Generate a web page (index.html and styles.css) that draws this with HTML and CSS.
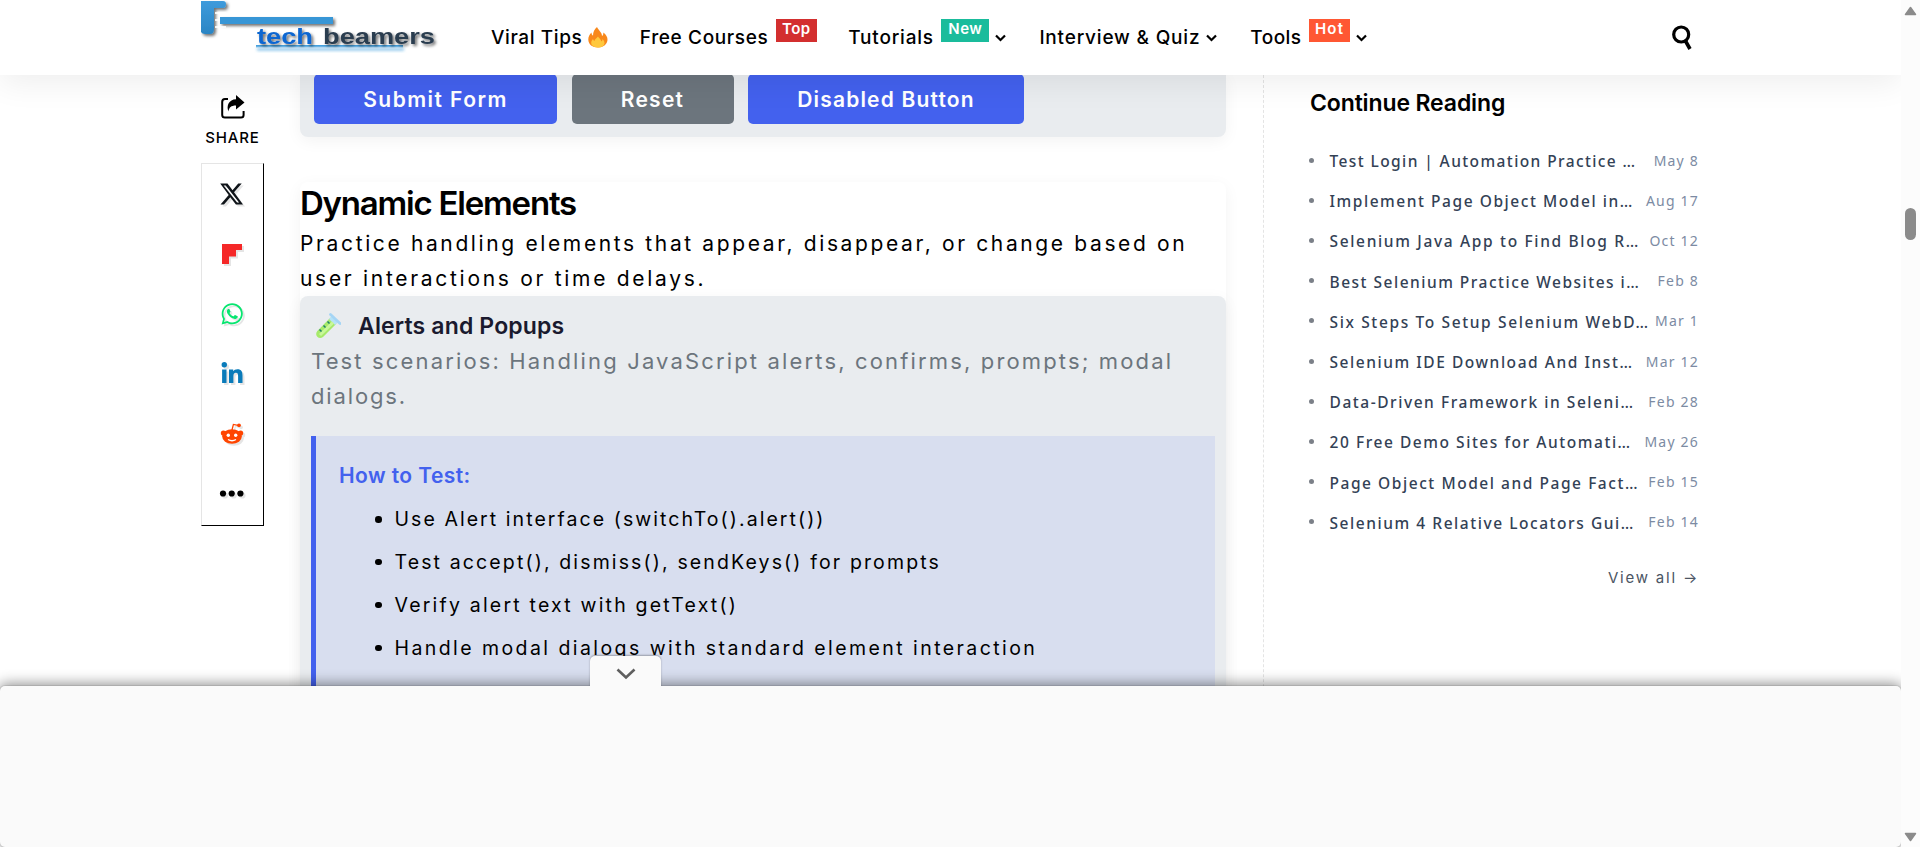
FILE: index.html
```html
<!DOCTYPE html>
<html lang="en">
<head>
<meta charset="utf-8">
<title>Selenium Practice - TechBeamers</title>
<link rel="stylesheet" href="styles.css">
</head>
<body>
<div class="viewport">
<div class="page">
  <header class="header">
    <div class="header-inner">
      <a class="logo">
        <svg width="240" height="56" viewBox="0 0 240 56">
          <defs>
            <filter id="soft" x="-20%" y="-40%" width="150%" height="220%"><feDropShadow dx="2" dy="2" stdDeviation="1.8" flood-color="#000" flood-opacity=".55"/></filter>
            <filter id="haze" x="-10%" y="-100%" width="120%" height="400%"><feDropShadow dx="1" dy="3" stdDeviation="1.6" flood-color="#3498db" flood-opacity=".6"/></filter>
            <linearGradient id="blue" x1="0" y1="0" x2="0" y2="1"><stop offset="0" stop-color="#3f9bdc"/><stop offset="1" stop-color="#2b85c4"/></linearGradient>
            <linearGradient id="line" x1="0" y1="0" x2="0" y2="1"><stop offset="0" stop-color="#3498db"/><stop offset="1" stop-color="#8cc3e8"/></linearGradient>
          </defs>
          <g filter="url(#soft)">
            <path d="M0 1H22Q25 1 25 4Q25 8 22 8H13V29Q13 34 9 34H4Q1 34 0 32Z" fill="url(#blue)"/>
            <rect x="19" y="17" width="113" height="7" fill="#3896d6"/>
          </g>
          <path d="M14 13H25M14 20H19M14 27H25" stroke="#fff" stroke-width="2" opacity=".85"/>
          <rect x="55" y="45" width="147" height="2.500" fill="url(#line)" filter="url(#haze)"/>
          <g filter="url(#soft)" class="logo-text">
            <text x="56" y="44" textLength="56" lengthAdjust="spacingAndGlyphs" fill="#0a66d0">tech</text>
            <text x="122" y="44" textLength="112" lengthAdjust="spacingAndGlyphs" fill="#2c3e50">beamers</text>
          </g>
        </svg>
      </a>
      <nav class="nav">
        <a class="nav-item"><span class="t1">Viral Tips</span>
          <svg class="fire" width="20" height="21" viewBox="0 0 20 21"><path d="M9 0C10 3 14 5 14 9C15 8.500 15.500 7.500 15.300 5.500C18 7.500 19.700 10 19.500 13C19.200 17.500 15 20.500 10 20.500C4.500 20.500.3 17.500.3 12.500C.3 9.500 1.500 7.500 3.500 5.500C3.500 7 4 8 5 8.700C5 5 6.500 2 9 0Z" fill="#f8881b"/><path d="M10 9.500C11 11.500 13 12 13.300 14.500C14.300 14 14.500 13 14.500 12C16.500 14 17 16 16 18C14.500 20 12.500 20.500 10 20.500C7 20.500 4.500 19.600 3.500 17.500C2.700 15.500 3.500 13.500 5 12C5.200 13 5.700 13.700 6.500 14C6.700 12 8.500 11.500 10 9.500Z" fill="#ffc83d"/></svg></a>
        <a class="nav-item"><span class="t2">Free Courses</span><b class="badge top">Top</b></a>
        <a class="nav-item"><span class="t3">Tutorials</span><b class="badge new">New</b><svg class="chev" width="13" height="8" viewBox="0 0 13 8"><path d="M1 1.500L5.500 6L10 1.500"/></svg></a>
        <a class="nav-item"><span class="t4">Interview &amp; Quiz</span><svg class="chev" width="13" height="8" viewBox="0 0 13 8"><path d="M1 1.500L5.500 6L10 1.500"/></svg></a>
        <a class="nav-item"><span class="t5">Tools</span><b class="badge hot">Hot</b><svg class="chev" width="13" height="8" viewBox="0 0 13 8"><path d="M1 1.500L5.500 6L10 1.500"/></svg></a>
      </nav>
      <svg class="search" width="20" height="26" viewBox="0 0 20 26"><circle cx="9.200" cy="9.500" r="7.500" fill="none" stroke="#000" stroke-width="3.200"/><path d="M13.500 16L18 24" stroke="#000" stroke-width="3.600"/></svg>
    </div>
  </header>

  <div class="columns">
    <aside class="share">
      <svg class="share-icon" width="24" height="24" viewBox="0 0 24 24"><path d="M7 4H4Q1.200 4 1.200 7V20Q1.200 22.500 4 22.500H20Q22.600 22.500 22.600 20V16" fill="none" stroke="#000" stroke-width="2"/><path d="M15 0L23.500 7.500L15 14.500V10.500C10 10.500 8 12.500 7.500 16.500C5 11 8 4.500 15 4.300Z" fill="#000"/></svg>
      <span class="share-label">SHARE</span>
      <div class="share-box">
        <svg width="24" height="24" viewBox="0 0 24 24"><path fill="#0f1419" d="M18.244 1.500h3.500l-7.700 8.800L23 22.500h-7.100l-5.600-7.300-6.300 7.300H.5l8.200-9.400L.2 1.500h7.300l5 6.700zm-1.200 19h2L5.700 3.400H3.600z"/></svg>
        <svg width="24" height="24" viewBox="0 0 24 24"><path fill="#f52828" d="M2 2H22V8H16V14.500H9V22H2Z"/></svg>
        <svg width="24" height="24" viewBox="0 0 24 24"><path fill="#07e670" d="M19.700 4.300C17.700 2.300 15 1.300 12.200 1.300 6.400 1.300 1.700 6 1.700 11.800c0 1.900.5 3.700 1.400 5.300L1.600 22.500l5.600-1.500c1.500.8 3.300 1.300 5 1.300 5.800 0 10.600-4.700 10.600-10.500 0-2.800-1.200-5.500-3.100-7.500zm-7.500 16.200c-1.600 0-3.100-.4-4.500-1.200l-.3-.2-3.300.9.9-3.200-.2-.3c-.9-1.400-1.300-3-1.300-4.700 0-4.800 3.900-8.700 8.700-8.700 2.300 0 4.500.9 6.200 2.600 1.600 1.600 2.600 3.800 2.600 6.100-.1 4.800-4 8.700-8.800 8.700zm4.800-6.500c-.3-.1-1.600-.8-1.800-.9-.2-.1-.4-.1-.6.1-.2.300-.7.900-.8 1-.2.200-.3.200-.6.100-1.500-.8-2.600-1.400-3.600-3.100-.3-.5.300-.4.800-1.400.1-.2 0-.3 0-.5s-.6-1.400-.8-1.900c-.2-.5-.4-.4-.6-.4h-.5c-.2 0-.5.100-.7.300-.2.300-.9.900-.9 2.200s.9 2.500 1.100 2.700c.1.200 1.800 2.800 4.500 4 1.700.7 2.300.8 3.200.7.500-.1 1.600-.7 1.800-1.300.2-.6.200-1.200.2-1.300-.1-.2-.3-.2-.7-.3z"/></svg>
        <svg width="24" height="24" viewBox="0 0 24 24"><g fill="#0a7bba"><circle cx="4.300" cy="2.800" r="2.700"/><path d="M2.100 7.500H6.500V21H2.100ZM9 7.500H13.200V9.300C14 8 15.400 7.200 17.400 7.200C21.500 7.200 22.500 9.800 22.500 13.500V21H18.100V14.300C18.100 12.500 17.900 10.800 15.900 10.800C13.900 10.800 13.400 12.300 13.400 14.200V21H9Z"/></g></svg>
        <svg width="24" height="24" viewBox="0 0 24 24"><g fill="#ff4500"><ellipse cx="12" cy="14.500" rx="9.800" ry="7.300"/><circle cx="3.400" cy="11" r="2.600"/><circle cx="20.600" cy="11" r="2.600"/><circle cx="19" cy="3.300" r="1.900"/></g><path d="M12 8L13.400 2.400L18 3.300" fill="none" stroke="#ff4500" stroke-width="1.300"/><circle cx="8.300" cy="13.200" r="1.700" fill="#fff"/><circle cx="15.700" cy="13.200" r="1.700" fill="#fff"/><path d="M8 17.500Q12 20 16 17.500" stroke="#fff" stroke-width="1.300" fill="none"/></svg>
        <svg width="26" height="24" viewBox="0 0 26 24"><circle cx="4" cy="11.500" r="3.100"/><circle cx="12.700" cy="11.500" r="3.100"/><circle cx="21.400" cy="11.500" r="3.100"/></svg>
      </div>
    </aside>

    <main class="article">
      <section class="card form-card">
        <button class="btn submit">Submit Form</button>
        <button class="btn reset">Reset</button>
        <button class="btn disabled">Disabled Button</button>
      </section>
      <section class="section">
        <h2>Dynamic Elements</h2>
        <p class="lead">Practice handling elements that appear, disappear, or change based on<br><span class="tail">user interactions or time delays.</span></p>
        <div class="card alerts">
          <h3><svg width="26" height="26" viewBox="0 0 26 26"><path d="M15.500 4.500L21.500 10.500L8 24C6.200 25.500 3.800 25.400 2.300 23.800C.8 22.200.8 20 2.300 18Z" fill="#a6ea6a"/><path d="M14 6L20 12L22.500 9.500L16.500 3.500Z" fill="#b5e2f8"/><path d="M15.500 1.500L25 10.500" stroke="#a5d5f5" stroke-width="2.800" stroke-linecap="round"/><path d="M5 22L18 9.500" stroke="#c9f79a" stroke-width="3"/><path d="M4.500 16.500L6.500 18.500M8.500 12.500L10.500 14.500M12.500 8.500L14.500 10.500" stroke="#1d7f6a" stroke-width="1.500"/></svg><span>Alerts and Popups</span></h3>
          <p class="muted">Test scenarios: Handling JavaScript alerts, confirms, prompts; modal<br><span class="last">dialogs.</span></p>
          <div class="note">
            <h4>How to Test:</h4>
            <ul>
              <li>Use Alert interface (switchTo().alert())</li>
              <li>Test accept(), dismiss(), sendKeys() for prompts</li>
              <li>Verify alert text with getText()</li>
              <li>Handle modal dialogs with standard element interaction</li>
            </ul>
          </div>
        </div>
      </section>
    </main>

    <aside class="sidebar">
      <h3 class="side-title">Continue Reading</h3>
      <ul class="posts">
        <li><a>Test Login | Automation Practice …</a><time>May 8</time></li>
        <li><a>Implement Page Object Model in…</a><time>Aug 17</time></li>
        <li><a>Selenium Java App to Find Blog R…</a><time>Oct 12</time></li>
        <li><a>Best Selenium Practice Websites i…</a><time>Feb 8</time></li>
        <li><a>Six Steps To Setup Selenium WebD…</a><time>Mar 1</time></li>
        <li><a>Selenium IDE Download And Inst…</a><time>Mar 12</time></li>
        <li><a>Data-Driven Framework in Seleni…</a><time>Feb 28</time></li>
        <li><a>20 Free Demo Sites for Automati…</a><time>May 26</time></li>
        <li><a>Page Object Model and Page Fact…</a><time>Feb 15</time></li>
        <li><a>Selenium 4 Relative Locators Gui…</a><time>Feb 14</time></li>
      </ul>
      <a class="view-all">View all →</a>
    </aside>
  </div>

  <div class="anchor-ad">
    <div class="ad-tab"><svg width="20" height="12" viewBox="0 0 20 12"><path d="M1.500 1.500L10 9.500L18.500 1.500" fill="none" stroke="#5f5f5f" stroke-width="2.600"/></svg></div>
  </div>
</div>
<div class="scrollbar">
  <svg class="up" width="13" height="10" viewBox="0 0 13 10"><path d="M6.500 1.500L11.500 8.500H1.500Z"/></svg>
  <div class="thumb"></div>
  <svg class="down" width="13" height="10" viewBox="0 0 13 10"><path d="M6.500 8.500L11.500 1.500H1.500Z"/></svg>
</div>
</div>
</body>
</html>
```

FILE: styles.css
```css
* { box-sizing: border-box; }
body { margin: 0; background: #fff; color: #000; font-family: Inter, "Noto Sans", sans-serif; overflow: hidden; }
h2, h3, h4, p, ul { margin: 0; padding: 0; }
ul { list-style: none; }
svg { display: block; flex: none; }

.viewport { display: flex; height: 847px; }
.page { position: relative; width: 1901px; height: 847px; overflow: hidden; }

/* header */
.header { position: relative; z-index: 3; height: 75px; background: #fff; box-shadow: 0 8px 32px rgba(0, 0, 0, .07); }
.header-inner { width: 1499px; height: 75px; margin: 0 auto; display: flex; align-items: center; }
.logo { align-self: flex-start; width: 290px; }
.logo-text { font: 700 22.5px "Liberation Sans", sans-serif; }
.nav { display: flex; gap: 31.5px; height: 75px; align-items: center; }
.nav-item { display: flex; align-items: center; height: 75px; font-size: 19px; font-weight: 500; white-space: nowrap; }
.t1 { letter-spacing: .6px; }
.t2 { letter-spacing: .63px; }
.t3 { letter-spacing: .8px; }
.t4 { letter-spacing: .81px; }
.t5 { letter-spacing: .47px; }
.fire { margin-left: 6px; }
.badge { align-self: flex-start; height: 23px; margin: 19px 0 0 7.5px; color: #fff; font-size: 15px; font-weight: 600; line-height: 20px; text-align: center; letter-spacing: .5px; }
.top { width: 41px; background: #d32f2f; }
.new { width: 48px; background: #1abc9c; }
.hot { width: 41px; background: #ff5733; letter-spacing: 1.2px; }
.chev { margin-left: 5.5px; fill: none; stroke: #000; stroke-width: 2.2; }
.search { margin-left: auto; margin-right: 8px; }

/* columns */
.columns { width: 1499px; height: 772px; margin: 0 auto; display: flex; }
.share { width: 63px; margin-right: 36px; padding-top: 20px; display: flex; flex-direction: column; align-items: center; }
.share-label { height: 20px; margin: 9px 0 15px; font-size: 15px; line-height: 20px; font-weight: 500; letter-spacing: .82px; white-space: nowrap; }
.share-box { width: 63px; height: 363px; display: flex; flex-direction: column; align-items: center; gap: 36px; padding: 17.5px 2px 0 0; border: 1px solid #e5e5e5; border-right-color: #000; border-bottom-color: #000; }
.share-box svg { filter: drop-shadow(2px 2px 0 rgba(0, 0, 0, .1)); }

.article { width: 926px; margin-top: -1px; }
.card { background: #e9ecef; border-radius: 8px; box-shadow: 0 4px 16px rgba(0, 0, 0, .05); }
.form-card { height: 63px; padding-left: 14px; display: flex; gap: 14.5px; border-radius: 0 0 8px 8px; }
.btn { height: 50px; padding: 0; border: 0; border-radius: 5px; color: #fff; background: #4361ee; font: 600 21px/52px Inter, sans-serif; }
.submit { width: 243px; letter-spacing: 1.44px; }
.reset { width: 162px; background: #6c757d; letter-spacing: 1.24px; }
.disabled { width: 276px; letter-spacing: 1.17px; }

.section { margin-top: 45px; border-radius: 8px; box-shadow: 0 4px 16px rgba(0, 0, 0, .05); }
h2 { height: 44px; font-size: 33px; line-height: 42px; font-weight: 600; letter-spacing: -1.21px; }
.lead { font-size: 21px; line-height: 35px; letter-spacing: 2.63px; white-space: nowrap; }
.tail { letter-spacing: 2.7px; }
.alerts { height: 480px; padding: 11px; }
.alerts h3 { display: flex; align-items: center; height: 37px; padding-left: 4px; gap: 17px; color: #1a1a2e; font-size: 23px; font-weight: 600; letter-spacing: .15px; }
.muted { color: #6c757d; font-size: 22px; line-height: 35px; letter-spacing: 2.15px; white-space: nowrap; }
.last { letter-spacing: 1.86px; }
.note { height: 400px; margin-top: 22px; padding: 24px 0 0 23px; border-left: 5px solid #4361ee; background: #d8deef; }
.note h4 { color: #4361ee; font-size: 21px; line-height: 32px; font-weight: 600; letter-spacing: .42px; }
.note ul { margin: 6px 0 0 36px; }
.note li { display: flex; align-items: center; gap: 13px; height: 42.8px; font-size: 19.5px; letter-spacing: 2.06px; white-space: nowrap; }
.note li::before { content: ""; width: 6.5px; height: 6.5px; border-radius: 50%; background: #000; }
.note li:nth-child(2) { letter-spacing: 2.13px; }
.note li:nth-child(3) { letter-spacing: 2.2px; }
.note li:nth-child(4) { letter-spacing: 2.43px; }

/* sidebar */
.sidebar { width: 435px; height: 772px; margin-left: 37px; padding: 0 0 0 46px; border-left: 1px dashed #e4e4e4; }
.side-title { padding-top: 1px; line-height: 55px; font-size: 23px; font-weight: 600; letter-spacing: -.13px; }
.posts { margin-top: 10px; }
.posts li { display: flex; align-items: center; height: 40.2px; font-family: "Noto Sans", sans-serif; white-space: nowrap; }
.posts li::before { content: ""; width: 5px; height: 5px; margin: -2px 15.5px 0 -1px; border-radius: 50%; background: #7b8088; }
.posts a { color: #334155; font-size: 15.5px; font-weight: 500; letter-spacing: 1.55px; }
.posts time { margin: -2px -1px 0 auto; color: #7c8ba3; font-size: 14px; letter-spacing: 1.2px; }
.posts li:nth-child(1) a { letter-spacing: 1.4px; }
.posts li:nth-child(3) a { letter-spacing: 1.66px; }
.posts li:nth-child(4) a { letter-spacing: 1.5px; }
.posts li:nth-child(5) a { letter-spacing: 1.63px; }
.view-all { display: block; margin: 20.5px -1px 0 0; text-align: right; color: #4b5563; font-size: 15px; line-height: 30px; letter-spacing: 1.79px; }

/* anchored panel */
.anchor-ad { position: absolute; z-index: 4; left: 0; right: 0; bottom: 0; height: 161px; border-radius: 5px; background: #fafafa; box-shadow: 0 0 0 1px rgba(0, 0, 0, .08), 0 -1px 14px 1px rgba(0, 0, 0, .45); }
.ad-tab { position: absolute; left: 590px; top: -30px; width: 71px; height: 31px; display: flex; justify-content: center; padding-top: 12px; border-radius: 5px 5px 0 0; background: #fafafa; box-shadow: 0 -1px 2px rgba(0, 0, 0, .3); clip-path: inset(-6px -6px 1px -6px); }

.scrollbar { width: 19px; height: 847px; display: flex; flex-direction: column; align-items: center; padding: 6px 0 5px; background: #fcfcfc; fill: #8b8b8b; stroke: #8b8b8b; stroke-width: 1.5; stroke-linejoin: round; }
.thumb { width: 11px; height: 32px; margin-top: 192px; border-radius: 6px; background: #8b8b8b; }
.down { margin-top: auto; }
```
